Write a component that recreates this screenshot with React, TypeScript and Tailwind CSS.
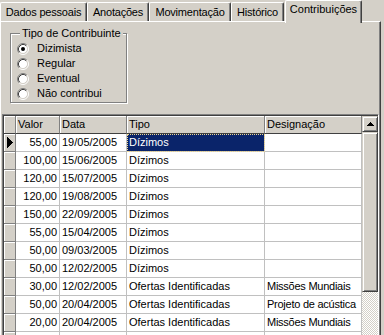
import React from "react";

const rows = [
  ["55,00", "19/05/2005", "Dízimos", ""],
  ["100,00", "15/06/2005", "Dízimos", ""],
  ["120,00", "15/07/2005", "Dízimos", ""],
  ["120,00", "19/08/2005", "Dízimos", ""],
  ["150,00", "22/09/2005", "Dízimos", ""],
  ["55,00", "15/04/2005", "Dízimos", ""],
  ["50,00", "09/03/2005", "Dízimos", ""],
  ["50,00", "12/02/2005", "Dízimos", ""],
  ["30,00", "12/02/2005", "Ofertas Identificadas", "Missões Mundiais"],
  ["50,00", "20/04/2005", "Ofertas Identificadas", "Projeto de acústica"],
  ["20,00", "20/04/2005", "Ofertas Identificadas", "Missões Mundiais"],
  ["", "", "", ""],
];

const tabs = [
  { label: "Dados pessoais", w: "w-[87px]" },
  { label: "Anotações", w: "w-[62px]" },
  { label: "Movimentação", w: "w-[82px]" },
  { label: "Histórico", w: "w-[53px]" },
];

const raised =
  "border border-t-[#d4d0c8] border-l-[#d4d0c8] border-r-[#404040] border-b-[#404040] shadow-[inset_1px_1px_0_#fff,inset_-1px_-1px_0_#808080] bg-[#d4d0c8]";

function Radio({ checked }: { checked?: boolean }) {
  return (
    <svg width="12" height="12" viewBox="0 0 12 12" className="shrink-0">
      <circle cx="6" cy="6" r="4.5" fill="#fff" />
      <path d="M2.11 9.89A5.5 5.5 0 0 1 9.89 2.11" stroke="#808080" fill="none" />
      <path d="M9.89 2.11A5.5 5.5 0 0 1 2.11 9.89" stroke="#fff" fill="none" />
      <path d="M2.82 9.18A4.5 4.5 0 0 1 9.18 2.82" stroke="#404040" fill="none" />
      <path d="M9.18 2.82A4.5 4.5 0 0 1 2.82 9.18" stroke="#d4d0c8" fill="none" />
      {checked && <circle cx="6" cy="6" r="2" fill="#000" />}
    </svg>
  );
}

function HeaderCell({ w, children }: { w: string; children?: React.ReactNode }) {
  return (
    <div
      className={`${w} h-full shrink-0 flex items-center pl-[2px] bg-[#d4d0c8] border-r border-b border-r-[#808080] border-b-[#404040] shadow-[inset_1px_1px_0_#fff] overflow-hidden whitespace-nowrap`}
    >
      {children}
    </div>
  );
}

export default function App() {
  return (
    <div className="w-[384px] h-[335px] overflow-hidden bg-[#d4d0c8] text-black text-[11px] font-['Liberation_Sans',Arial,sans-serif]">
      {/* tabs */}
      <div className="flex h-[21px] items-start">
        {tabs.map((t) => (
          <div
            key={t.label}
            className={`${t.w} mt-[2px] h-[19px] shrink-0 flex items-center justify-center border-t border-l border-r border-t-white border-l-white border-r-[#404040] rounded-t-[2px] shadow-[inset_-1px_0_0_#808080] whitespace-nowrap tracking-[-0.2px]`}
          >
            {t.label}
          </div>
        ))}
        <div className="relative z-10 ml-[1px] w-[77px] h-[23px] shrink-0 flex items-center justify-center pb-[5px] bg-[#d4d0c8] border-t border-l border-r border-t-white border-l-white border-r-[#404040] rounded-t-[2px] shadow-[inset_-1px_0_0_#808080] whitespace-nowrap">
          Contribuições
        </div>
      </div>

      {/* tab panel */}
      <div className="w-[381px] h-[320px] border-l border-t border-r border-l-white border-t-white border-r-[#404040] shadow-[inset_-1px_0_0_#808080]">
        {/* group box */}
        <div className="relative ml-[9px] mt-[11px] h-[70px] w-[117px] border border-[#808080] shadow-[inset_1px_1px_0_#fff,1px_1px_0_#fff] pl-[6px] pt-[7px]">
          <span className="absolute left-[9px] -top-[7px] bg-[#d4d0c8] px-[2px] leading-[13px] whitespace-nowrap">
            Tipo de Contribuinte
          </span>
          {["Dizimista", "Regular", "Eventual", "Não contribui"].map((l, i) => (
            <div key={l} className="flex h-[15px] items-center gap-[8px]">
              <Radio checked={i === 0} />
              <span>{l}</span>
            </div>
          ))}
        </div>

        {/* grid */}
        <div className="ml-[1px] mt-[11px] w-[377px] h-[230px] border-t border-l border-r border-t-[#808080] border-l-[#808080] border-r-white">
          <div className="flex h-full border-t border-l border-[#404040] bg-white">
            <div className="w-[358px] shrink-0 overflow-hidden">
              <div className="flex h-[18px]">
                <HeaderCell w="w-[12px]" />
                <HeaderCell w="w-[44px]">Valor</HeaderCell>
                <HeaderCell w="w-[67px]">Data</HeaderCell>
                <HeaderCell w="w-[138px]">Tipo</HeaderCell>
                <HeaderCell w="w-[97px]">Designação</HeaderCell>
              </div>
              {rows.map((r, i) => (
                <div key={i} className="flex h-[18px]">
                  <div className="w-[12px] shrink-0 flex items-center justify-center bg-[#d4d0c8] border-r border-b border-[#808080] shadow-[inset_1px_1px_0_#fff]">
                    {i === 0 && (
                      <svg width="6" height="11" viewBox="0 0 6 11" shapeRendering="crispEdges">
                        <polygon points="0,0 6,5.5 0,11" fill="#000" />
                      </svg>
                    )}
                  </div>
                  <div className="w-[44px] shrink-0 flex items-center justify-end pr-[2px] border-r border-b border-[#c0c0c0]">
                    {r[0]}
                  </div>
                  <div className="w-[67px] shrink-0 flex items-center pl-[2px] border-r border-b border-[#c0c0c0]">
                    {r[1]}
                  </div>
                  <div
                    className={`w-[138px] shrink-0 flex items-center pl-[2px] border-r border-b border-[#c0c0c0] whitespace-nowrap ${
                      i === 0
                        ? "bg-[#0a246a] text-white outline-1 outline-dotted outline-[#f0d890] -outline-offset-1"
                        : ""
                    }`}
                  >
                    {r[2]}
                  </div>
                  <div className="w-[97px] shrink-0 flex items-center pl-[2px] border-r border-b border-[#c0c0c0] whitespace-nowrap overflow-hidden tracking-[-0.25px]">
                    {r[3]}
                  </div>
                </div>
              ))}
            </div>

            {/* scrollbar */}
            <div className="w-[16px] shrink-0 flex flex-col">
              <div className={`h-[16px] shrink-0 flex items-center justify-center ${raised}`}>
                <svg width="7" height="4" viewBox="0 0 7 4" shapeRendering="crispEdges">
                  <polygon points="3.5,0 7,4 0,4" fill="#000" />
                </svg>
              </div>
              <div className={`h-[160px] shrink-0 ${raised}`} />
              <div className="flex-1 bg-[repeating-conic-gradient(#fff_0_25%,#d4d0c8_0_50%)] bg-[length:2px_2px]" />
            </div>
          </div>
        </div>
      </div>
    </div>
  );
}
